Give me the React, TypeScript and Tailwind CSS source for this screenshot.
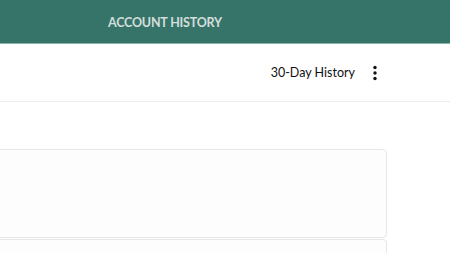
import React from "react";

const App = () => {
  return (
    <div className="w-[450px] h-[253px] overflow-hidden bg-white" style={{ fontFamily: "Lato, 'Liberation Sans', sans-serif" }}>
      <div className="h-[44px] bg-[#36746a] border-b border-[#8db3aa] flex items-center pt-[3px]">
        <span className="ml-[108px] text-[12.5px] font-bold text-[#d3dfdb] tracking-[-0.2px]">ACCOUNT HISTORY</span>
      </div>
      <div className="h-[58px] border-b border-[#ececec] flex items-center justify-end pr-[72px] pt-[2px]">
        <span className="text-[12.5px] text-[#111]">30-Day History</span>
        <svg className="ml-[17px] -mt-[1px]" width="6" height="16" viewBox="0 0 6 16">
          <circle cx="3" cy="2.5" r="1.7" fill="#111" />
          <circle cx="3" cy="8" r="1.7" fill="#111" />
          <circle cx="3" cy="13.5" r="1.7" fill="#111" />
        </svg>
      </div>
      <div className="pt-[47px] pr-[63px]">
        <div className="-ml-[10px] flex flex-col gap-[1px]">
          <div className="h-[89px] bg-[#fdfdfd] border border-[#e6e6e6] rounded-[4px]" />
          <div className="h-[60px] bg-[#fdfdfd] border border-[#e6e6e6] rounded-[4px]" />
        </div>
      </div>
    </div>
  );
};

export default App;
